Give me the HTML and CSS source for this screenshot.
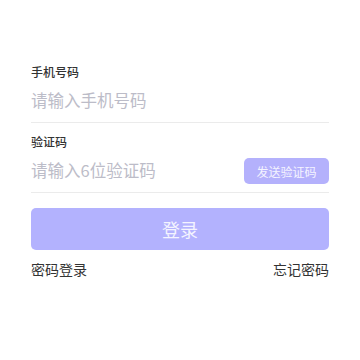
FILE: index.html
```html
<!DOCTYPE html>
<html lang="zh-CN">
	<head>
		<meta charset="UTF-8" />
		<meta name="viewport" content="width=device-width, initial-scale=1.0" />
		<title>验证码登录</title>
		<link rel="stylesheet" href="styles.css">
	</head>
	<body>
		<div class="login">
			<div class="field">
				<label class="field-label">手机号码</label>
				<div class="field-row">
					<input type="text" placeholder="请输入手机号码" />
				</div>
			</div>
			<div class="field">
				<label class="field-label">验证码</label>
				<div class="field-row">
					<input type="text" placeholder="请输入6位验证码" />
					<button class="send-code">发送验证码</button>
				</div>
			</div>
			<button class="submit">登录</button>
			<div class="links">
				<a href="#">密码登录</a>
				<a href="#">忘记密码</a>
			</div>
		</div>
	</body>
</html>
```

FILE: styles.css
```css
* {
	box-sizing: border-box;
}
body {
	margin: 0;
	background: #fff;
	font-family: "Noto Sans CJK SC", "Noto Sans", sans-serif;
}
.login {
	padding: 63px 31px 0 31px;
}

.field {
	margin-bottom: 10px;
}

.field-label {
	display: block;
	font-size: 12px;
	line-height: 17px;
	color: #333;
	font-weight: 500;
}

.field-row {
	display: flex;
	align-items: center;
	height: 43px;
	border-bottom: 1px solid #ebebeb;
}

.field-row input {
	flex: 1;
	min-width: 0;
	border: none;
	outline: none;
	padding: 0 0 2px 0;
	font-size: 16.5px;
	font-family: inherit;
	color: #333;
	background: transparent;
}
.field-row input::placeholder {
	color: #bcbcc8;
}

.send-code {
	width: 85px;
	height: 26px;
	border: none;
	border-radius: 5px;
	background-color: #b4b1fc;
	color: #f4f4ff;
	font-size: 12px;
	font-family: inherit;
	padding: 0;
	cursor: pointer;
}

.submit {
	display: block;
	width: 100%;
	height: 42px;
	margin-top: 15px;
	border: none;
	border-radius: 5px;
	background-color: #b3b2fe;
	color: #f4f4ff;
	font-size: 18px;
	font-family: inherit;
	cursor: pointer;
}

.links {
	display: flex;
	justify-content: space-between;
	margin-top: 9px;
}
.links a {
	font-size: 14px;
	line-height: 20px;
	color: #333;
	text-decoration: none;
}
```
